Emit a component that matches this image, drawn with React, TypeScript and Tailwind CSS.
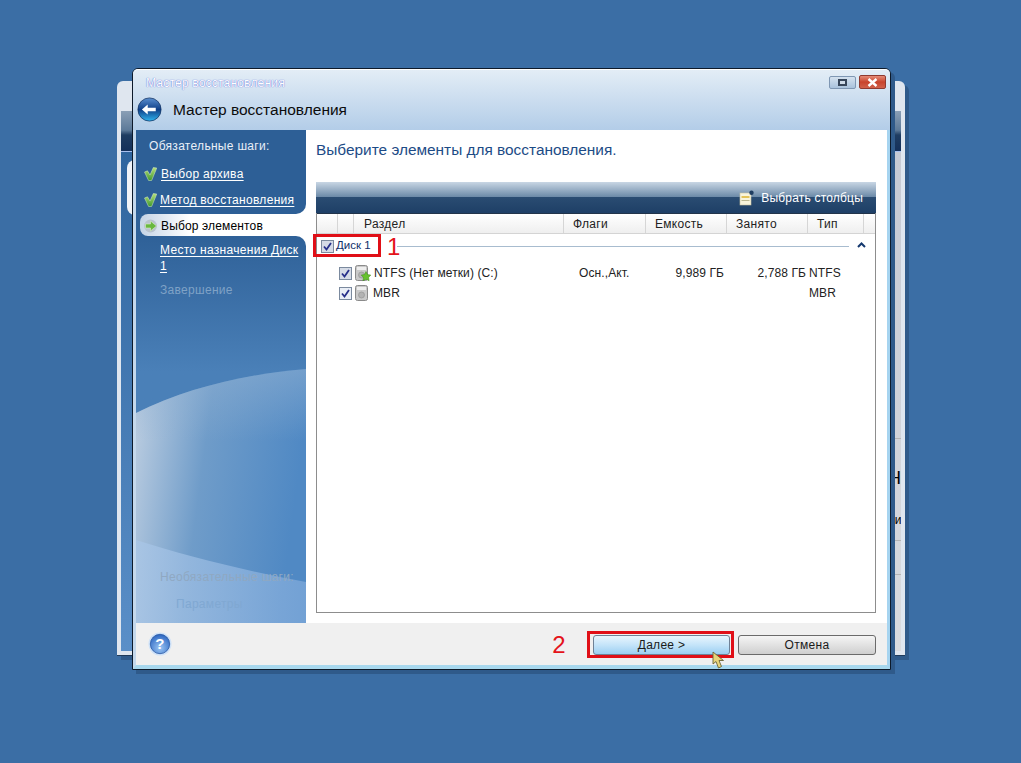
import React from "react";

const font = { fontFamily: '"Liberation Sans", Arial, sans-serif' };

function Check({ checked = true, dim = false }: { checked?: boolean; dim?: boolean }) {
  return (
    <span className={`flex h-[13px] w-[13px] shrink-0 items-center justify-center border border-[#7b8a9e] ${dim ? "bg-[#d5dbe6]" : "bg-[#e9eef6]"}`}>
      {checked && (
        <svg width="9" height="9" viewBox="0 0 9 9">
          <path d="M1 4.5 L3.5 7.5 L8 1" fill="none" stroke="#27308a" strokeWidth="1.8" />
        </svg>
      )}
    </span>
  );
}

function GreenCheck({ id }: { id: string }) {
  return (
    <svg width="13" height="14" viewBox="0 0 13 14" className="shrink-0">
      <defs>
        <linearGradient id={id} x1="0" y1="0" x2="0" y2="1">
          <stop offset="0" stopColor="#b6e07a" />
          <stop offset="1" stopColor="#3f9a2e" />
        </linearGradient>
      </defs>
      <path d="M0.5 5 L3.5 3.8 L6 8 L9.3 0.5 L12.8 1 L7.6 13.5 L4.6 13.5 Z" fill={`url(#${id})`} stroke="#d9efc8" strokeWidth="0.5" />
    </svg>
  );
}

function BackWindow() {
  return (
    <div className="absolute left-[117px] top-[81px] flex h-[575px] w-[788px] flex-col rounded-t-[6px] border-b border-b-[#1f3a5a] bg-[#dfe6ef] px-[4px] pb-[4px] pt-[30px] shadow-[4px_4px_0_#2f5a8a]">
      <div className="h-[41px] shrink-0 border-b border-b-[#a9c0ee] bg-[linear-gradient(to_bottom,#8a9fb6_0%,#5d7a99_48%,#1f3d62_60%,#14305a_100%)]" />
      <div className="flex min-h-0 flex-1">
        <div className="relative w-[100px] bg-gradient-to-b from-[#2f659e] to-[#5a8fc8]">
          <div className="absolute left-[6px] top-[8px] h-[55px] w-[60px] rounded-l-[8px] bg-[#f0f3f7]" />
        </div>
        <div className="flex-1 bg-gradient-to-b from-[#c6cad4] to-[#d9dbdf]" />
      </div>
    </div>
  );
}

function BackRightText() {
  return (
    <div className="absolute left-[888px] top-[438px] flex w-[13px] flex-col overflow-hidden text-black" style={font}>
      <div className="h-px bg-[#b5b5b5]" />
      <div className="mt-[28px] h-[22px] whitespace-nowrap text-[18px] leading-[22px]">НС</div>
      <div className="mt-[24px] h-[14px] whitespace-nowrap text-[12px] leading-[14px]">ии</div>
      <div className="mt-[13px] h-px bg-[#b5b5b5]" />
      <div className="mt-[33px] h-px bg-[#b5b5b5]" />
    </div>
  );
}

function TitleBar() {
  return (
    <div className="relative h-[61px] shrink-0 rounded-t-[5px] border-t border-t-white bg-gradient-to-b from-[#e3edf6] to-[#b3cde8]">
      <div className="px-[13px] pt-[6px] text-[12px] leading-[14px] tracking-[0.2px] text-white [text-shadow:0_0_1px_#2432c8]">
        Мастер восстановления
      </div>
      <div className="mt-[7px] flex items-center gap-[11px] px-[4px]">
        <svg width="25" height="25" viewBox="0 0 28 28" className="shrink-0">
          <defs>
            <linearGradient id="bk" x1="0" y1="0" x2="0" y2="1">
              <stop offset="0" stopColor="#5b8fd0" />
              <stop offset="0.5" stopColor="#0f3f88" />
              <stop offset="1" stopColor="#2fb4ee" />
            </linearGradient>
          </defs>
          <circle cx="14" cy="14" r="13" fill="url(#bk)" stroke="#12305e" strokeWidth="0.8" />
          <path d="M5.5 14 L12 8.5 L12 12 L21 12 L21 16 L12 16 L12 19.5 Z" fill="#fff" />
        </svg>
        <span className="text-[15.5px] leading-[20px] text-[#0c0c0c]">Мастер восстановления</span>
      </div>
      <div className="absolute right-[4px] top-[5px] flex items-center gap-[3px]">
        <div className="flex h-[13px] w-[27px] items-center justify-center rounded-[2px] border border-[#7f97b3] bg-gradient-to-b from-[#d5e2ef] to-[#a9c2dc]">
          <div className="h-[7px] w-[9px] border-[2px] border-[#37465a] bg-[#cfdbe8]" />
        </div>
        <div className="flex h-[14px] w-[27px] items-center justify-center rounded-[2px] border border-[#8f3a30] bg-gradient-to-b from-[#e58b77] via-[#c8432c] to-[#d0604a]">
          <svg width="11" height="9" viewBox="0 0 11 9">
            <path d="M1.5 1 L9.5 8 M9.5 1 L1.5 8" stroke="#fff" strokeWidth="2.4" />
          </svg>
        </div>
      </div>
    </div>
  );
}

function Sidebar() {
  const link = "text-[12px] leading-[14px] tracking-[0.3px] text-white underline underline-offset-2";
  return (
    <aside className="flex w-[170px] shrink-0 flex-col bg-white">
      <div className="h-[84px] rounded-br-[10px] bg-[#2d5f96] pt-[9px]">
        <div className="pl-[13px] text-[12px] leading-[14px] tracking-[0.3px] text-[#e9f0f8]">Обязательные шаги:</div>
        <div className="mt-[14px] flex items-center gap-[4px] pl-[8px]">
          <GreenCheck id="gc1" />
          <span className={link}>Выбор архива</span>
        </div>
        <div className="mt-[12px] flex items-center gap-[3px] pl-[8px]">
          <GreenCheck id="gc2" />
          <span className={link}>Метод восстановления</span>
        </div>
      </div>
      <div className="h-[22px] bg-[#2f6198]">
        <div className="ml-[4px] flex h-full items-center gap-[4px] rounded-l-[8px] bg-gradient-to-r from-[#c5d4e6] via-white via-30% to-white pl-[4px] pt-[1px] text-[12px] tracking-[0.15px] text-black">
          <svg width="13" height="14" viewBox="0 0 13 14" className="shrink-0">
            <circle cx="6.5" cy="7" r="6.5" fill="#b9c3ce" />
            <path d="M1.5 5 H6.5 V2 L12.5 7 L6.5 12 V9 H1.5 Z" fill="#69b83f" stroke="#d8efc4" strokeWidth="0.6" />
          </svg>
          Выбор элементов
        </div>
      </div>
      <div className="relative flex-1 overflow-hidden rounded-tr-[10px] bg-gradient-to-b from-[#2f6198] via-[#4a80b8] via-35% to-[#4a80b8]">
        <svg className="absolute inset-0 h-full w-full" viewBox="0 0 170 387" preserveAspectRatio="none">
          <defs>
            <linearGradient id="sw" x1="0" y1="0" x2="1" y2="0.2">
              <stop offset="0" stopColor="#c0d0e2" />
              <stop offset="0.45" stopColor="#6f9cc9" />
              <stop offset="1" stopColor="#5089c4" />
            </linearGradient>
            <linearGradient id="sw3" gradientUnits="userSpaceOnUse" x1="0" y1="133" x2="0" y2="205">
              <stop offset="0" stopColor="#8fb0d2" stopOpacity="0.55" />
              <stop offset="1" stopColor="#8fb0d2" stopOpacity="0" />
            </linearGradient>
            <linearGradient id="sw2" x1="0" y1="0" x2="1" y2="0">
              <stop offset="0" stopColor="#a9c6e6" stopOpacity="0.8" />
              <stop offset="1" stopColor="#7ea9da" stopOpacity="0.75" />
            </linearGradient>
          </defs>
          <path d="M0 177 C 50 152, 110 138, 170 133 V387 H0 Z" fill="url(#sw)" />
          <path d="M0 177 C 50 152, 110 138, 170 133 V205 H0 Z" fill="url(#sw3)" />
          <path d="M0 304 C 50 320, 110 335, 170 346 V387 H0 Z" fill="url(#sw2)" />
        </svg>
        <div className="relative pl-[24px] pr-[6px] pt-[6px]">
          <div className={`${link} w-[142px] leading-[16px]`}>Место назначения Диск 1</div>
          <div className="mt-[9px] text-[12px] leading-[14px] tracking-[0.3px] text-[#7fa2c6]">Завершение</div>
        </div>
        <div className="absolute bottom-[39px] left-[24px] whitespace-nowrap text-[12px] leading-[14px] tracking-[0.3px] text-[#8fa8c2]">
          Необязательные шаги:
        </div>
        <div className="absolute bottom-[12px] left-[40px] whitespace-nowrap text-[12px] leading-[14px] tracking-[0.3px] text-[#80a8d2]">
          Параметры
        </div>
      </div>
    </aside>
  );
}

const columns = [
  { label: "", w: "w-[21px]" },
  { label: "", w: "w-[16px]" },
  { label: "Раздел", w: "w-[210px] pl-[10px]" },
  { label: "Флаги", w: "w-[82px] pl-[9px]" },
  { label: "Емкость", w: "w-[81px] pl-[9px]" },
  { label: "Занято", w: "w-[81px] pl-[9px]" },
  { label: "Тип", w: "w-[56px] pl-[9px]" },
  { label: "", w: "flex-1" },
];

function DiskIcon({ badge = false }: { badge?: boolean }) {
  return (
    <svg width="17" height="17" viewBox="0 0 17 17" className="shrink-0">
      <rect x="1.5" y="0.5" width="12" height="15" rx="2" fill="#c9c9c9" stroke="#8a8a8a" />
      <rect x="3" y="2" width="9" height="3" fill="#eeeeee" />
      <circle cx="7.5" cy="10" r="3" fill="#b3b3b3" stroke="#8f8f8f" strokeWidth="0.6" />
      {badge && <path d="M12 6.5 L13.6 9.6 L16.8 10.1 L14.6 12.4 L15.1 15.8 L12 14.2 L8.9 15.8 L9.4 12.4 L7.2 10.1 L10.4 9.6 Z" fill="#66c22e" stroke="#3c8a1a" strokeWidth="0.5" />}
    </svg>
  );
}

function Table() {
  return (
    <div className="mb-[10px] ml-[10px] mr-[11px] flex flex-1 flex-col border border-t-0 border-[#8d8d8d]">
      <div className="-mx-px flex h-[31px] shrink-0 items-center justify-end gap-[6px] bg-[linear-gradient(to_bottom,#c8d6e4_0%,#6c8aa8_48%,#2a4c72_50%,#1e3f66_100%)] pr-[13px] text-[12px] tracking-[0.2px] text-white">
        <svg width="16" height="16" viewBox="0 0 16 16">
          <rect x="1" y="3" width="11" height="12" fill="#f8f4dc" stroke="#c9c4a0" strokeWidth="0.6" />
          <rect x="2.5" y="6" width="8" height="2" fill="#e3c35a" />
          <rect x="2.5" y="10" width="8" height="1" fill="#bdb992" />
          <circle cx="12.5" cy="2.8" r="2.2" fill="#1f3d60" />
        </svg>
        Выбрать столбцы
      </div>
      <div className="flex h-[21px] shrink-0 border-b border-t border-b-[#d4d4d4] border-t-[#22344a] bg-gradient-to-b from-white to-[#efefef] text-[12px] leading-[21px] tracking-[0.3px] text-[#222]">
        {columns.map((c, i) => (
          <div key={i} className={`${c.w} border-r border-[#d6d6d6] ${i === columns.length - 1 ? "border-r-0" : ""}`}>
            {c.label}
          </div>
        ))}
      </div>
      <div className="flex-1 bg-white text-[12px] tracking-[0.1px] text-[#222]">
        <div className="flex h-[24px] items-center pl-[4px] pr-[9px]">
          <Check dim />
          <span className="ml-[2px] text-[11.5px] tracking-normal text-[#10306a]">Диск 1</span>
          <div className="ml-[26px] h-px flex-1 bg-[#a8bccf]" />
          <svg width="9" height="6" viewBox="0 0 9 6" className="mb-[2px] ml-[8px]">
            <path d="M1 5 L4.5 1.5 L8 5" fill="none" stroke="#14386e" strokeWidth="2" />
          </svg>
        </div>
        <Row name="NTFS (Нет метки) (C:)" flags="Осн.,Акт." size="9,989 ГБ" used="2,788 ГБ" type="NTFS" badge dim top />
        <Row name="MBR" type="MBR" />
      </div>
    </div>
  );
}

function Row(props: { name: string; flags?: string; size?: string; used?: string; type: string; badge?: boolean; dim?: boolean; top?: boolean }) {
  return (
    <div className={`flex h-[20px] items-center ${props.top ? "mt-[5px]" : ""}`}>
      <div className="ml-[22px] flex w-[240px] items-center gap-[2px]">
        <Check dim={props.dim} />
        <DiskIcon badge={props.badge} />
        <span className={`whitespace-nowrap ${props.badge ? "ml-[1px]" : ""}`}>{props.name}</span>
      </div>
      <div className="w-[50px] whitespace-nowrap">{props.flags}</div>
      <div className="w-[95px] whitespace-nowrap text-right">{props.size}</div>
      <div className="w-[82px] whitespace-nowrap text-right">{props.used}</div>
      <div className="ml-[3px] whitespace-nowrap">{props.type}</div>
    </div>
  );
}

function Footer() {
  return (
    <div className="flex h-[42px] shrink-0 items-center bg-[#f0f0f0] pl-[12px] pr-[11px] pt-[2px] text-[12px] tracking-[0.3px] text-[#1a1a1a]">
      <svg width="24" height="24" viewBox="0 0 24 24" className="-mt-[2px]">
        <defs>
          <radialGradient id="hp" cx="0.5" cy="0.7" r="0.7">
            <stop offset="0" stopColor="#9cc7f5" />
            <stop offset="1" stopColor="#2a64c0" />
          </radialGradient>
        </defs>
        <circle cx="12" cy="12" r="11.5" fill="#cfe2f8" />
        <circle cx="12" cy="12" r="9.7" fill="url(#hp)" stroke="#1c4e9c" strokeWidth="0.7" />
        <text x="12" y="17" textAnchor="middle" fontSize="15" fontWeight="700" fill="#fff" fontFamily="Liberation Sans">?</text>
      </svg>
      <span className="ml-auto text-[24px] leading-none text-[#e4131a]">2</span>
      <div className="relative ml-[27px]">
        <button className="flex h-[20px] w-[137px] items-center justify-center rounded-[3px] border border-[#6f8196] bg-gradient-to-b from-[#e9f5fd] via-[#c4e4f9] to-[#9ccff2]">
          <span><span className="underline">Д</span>алее &gt;</span>
        </button>
        <div className="pointer-events-none absolute -bottom-[3px] -left-[6px] -right-[4px] -top-[4px] border-[3px] border-[#e00f17]" />
        <svg width="14" height="19" viewBox="0 0 14 19" className="absolute left-[119px] top-[16px]">
          <path d="M1 1 L1 13 L4 10.5 L6.5 17 L9.5 15.5 L7 9.5 L11.5 9.5 Z" fill="#e8d47a" stroke="#6b6335" strokeWidth="0.9" />
        </svg>
      </div>
      <button className="ml-[8px] flex h-[20px] w-[138px] items-center justify-center rounded-[3px] border border-[#6b6b6b] bg-gradient-to-b from-[#f5f5f5] to-[#cfcfcf]">
        Отмена
      </button>
    </div>
  );
}

export default function App() {
  return (
    <div className="relative h-[763px] w-[1021px] overflow-hidden bg-[#3b6ea5]" style={font}>
      <BackWindow />
      <BackRightText />
      <div className="absolute left-[132px] top-[68px] flex h-[602px] w-[759px] flex-col rounded-t-[6px] border border-[#0d1a2a] bg-[#b8d0e8] shadow-[4px_4px_0_#2f5a8a]">
        <TitleBar />
        <div className="flex min-h-0 flex-1 flex-col border-b-[4px] border-l-[3px] border-r-[3px] border-b-[#a8d8ee] border-l-[#c4d8ec] border-r-[#a6d4f0]">
          <div className="flex min-h-0 flex-1">
            <Sidebar />
            <main className="relative flex flex-1 flex-col bg-white">
              <h1 className="px-[10px] pt-[10px] text-[15.4px] leading-[20px] text-[#1d4b86]">
                Выберите элементы для восстановления.
              </h1>
              <div className="h-[22px] shrink-0" />
              <Table />
              <div className="pointer-events-none absolute left-[7px] top-[104px] h-[23px] w-[68px] border-[3px] border-[#e00f17]" />
              <span className="absolute left-[81px] top-[104px] text-[24px] leading-[26px] text-[#e4131a]">1</span>
            </main>
          </div>
          <Footer />
        </div>
      </div>
    </div>
  );
}
